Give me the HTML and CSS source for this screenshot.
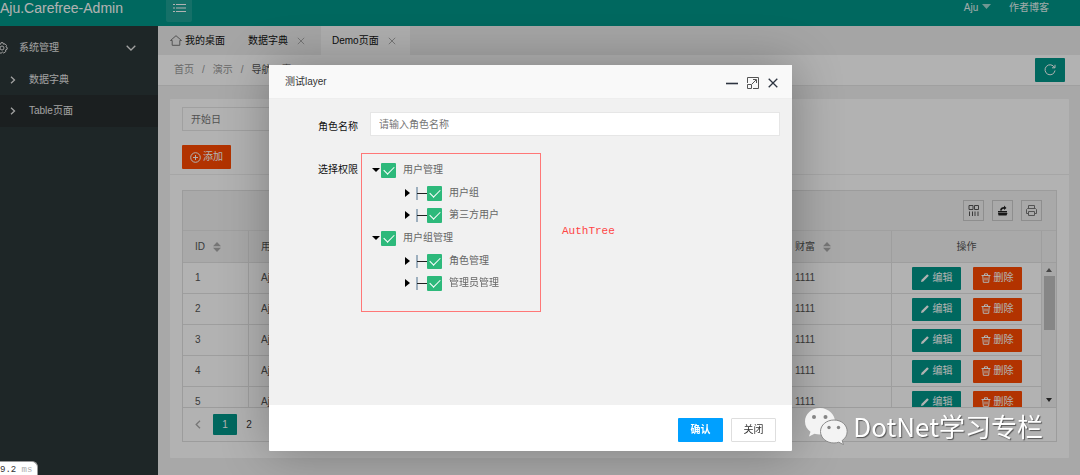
FILE: index.html
```html
<!DOCTYPE html>
<html lang="zh">
<head>
<meta charset="utf-8">
<title>Aju.Carefree-Admin</title>
<link rel="stylesheet" href="styles.css">
</head>
<body>
<svg class="sprite" aria-hidden="true">
  <symbol id="i-pen" viewBox="0 0 10 10"><path d="M1 9l.6-2.2L7.200 1.200l1.600 1.600L3.200 8.400z" fill="currentColor"/></symbol>
  <symbol id="i-bin" viewBox="0 0 10 10"><path d="M.5 2.500h9M3.500 2.300V.8h3v1.500M1.800 2.800l.5 6.500h5.400l.5-6.500M4 4.500v3M6 4.500v3" fill="none" stroke="currentColor"/></symbol>
  <symbol id="i-sort" viewBox="0 0 8 10"><path d="M0 4.200L4 0l4 4.200zM0 5.800h8L4 10z" fill="currentColor"/></symbol>
  <symbol id="i-x" viewBox="0 0 8 8"><path d="M.8.8l6.400 6.400M7.200.8L.8 7.200" fill="none" stroke="currentColor"/></symbol>
  <symbol id="i-right" viewBox="0 0 8 8"><path d="M2 .8L5.500 4 2 7.200" fill="none" stroke="currentColor" stroke-width="1.300"/></symbol>
  <symbol id="i-branch" viewBox="0 0 11 14"><path d="M1 1v13" stroke="#4a6f8c"/><path d="M1 7.500h10" stroke="#222"/></symbol>
</svg>

<div class="app">
  <header class="topbar">
    <div class="brand">Aju.Carefree-Admin</div>
    <button class="menu-toggle" aria-label="菜单"><svg width="13" height="10" viewBox="0 0 13 10"><path d="M3 1.500h10M3 5h10M3 8.500h10M0 1.500h2M0 5h2M0 8.500h2" stroke="currentColor" fill="none"/></svg></button>
    <nav class="user-nav">
      <a href="#">Aju <svg width="9" height="5" viewBox="0 0 9 5"><path d="M0 0h9L4.500 5z" fill="currentColor"/></svg></a>
      <a href="#">作者博客</a>
    </nav>
  </header>

  <div class="shell">
    <nav class="sidebar">
      <a class="side-group" href="#">
        <svg class="gear" width="12" height="12" viewBox="0 0 12 12" fill="none" stroke="currentColor"><path d="M5 .7h2l.5 1.500 1.500-.4 1.500 1.700-.6 1.400 1.400.8-.3 1.700-1.400.5.2 1.600L7.700 11l-1.200-.9L5 11.300 3.200 10.400l.2-1.600L1 8V6l1.200-.9-.7-1.500L3 2l1.500.3z"/><circle cx="6" cy="6" r="2"/></svg>
        <span>系统管理</span>
        <svg class="fold" width="10" height="6" viewBox="0 0 10 6"><path d="M.7.700L5 5 9.300.7" fill="none" stroke="currentColor" stroke-width="1.300"/></svg>
      </a>
      <a class="side-item" href="#"><svg width="8" height="8"><use href="#i-right"/></svg>数据字典</a>
      <a class="side-item active" href="#"><svg width="8" height="8"><use href="#i-right"/></svg>Table页面</a>
    </nav>

    <main class="main">
      <div class="tabs">
        <a class="tab home" href="#"><svg width="12" height="11" viewBox="0 0 12 11"><path d="M.5 5.500L6 .7l5.500 4.800H9.800v4.800H2.200V5.500z" fill="none" stroke="#777"/></svg>我的桌面</a>
        <a class="tab" href="#">数据字典<svg width="8" height="8"><use href="#i-x"/></svg></a>
        <a class="tab current" href="#">Demo页面<svg width="8" height="8"><use href="#i-x"/></svg></a>
      </div>
      <div class="crumb-bar">
        <nav class="crumbs"><a href="#">首页</a><span>/</span><a href="#">演示</a><span>/</span><a class="here" href="#">导航元素</a></nav>
        <button class="refresh" aria-label="刷新"><svg width="12" height="12" viewBox="0 0 12 12" fill="none" stroke="currentColor"><path d="M10.500 3.500A5 5 0 1 0 11 6.500M11 .8v3H8"/></svg></button>
      </div>

      <section class="card">
        <div class="card-head">
          <input class="date-input" type="text" placeholder="开始日" aria-label="开始日">
          <button class="btn danger add"><svg width="11" height="11" viewBox="0 0 11 11" fill="none" stroke="currentColor"><circle cx="5.500" cy="5.500" r="4.800"/><path d="M5.500 3v5M3 5.500h5"/></svg>添加</button>
        </div>
        <div class="grid">
          <div class="grid-tools">
            <button aria-label="筛选列"><svg width="11" height="11" viewBox="0 0 11 11" fill="none" stroke="#555"><path d="M1 .5h4v4H1zM6.500.5h4v4h-4zM1.500 6.500V11M4.500 6.500V11M7 6.500V11M10 6.500V11"/></svg></button>
            <button aria-label="导出"><svg width="11" height="11" viewBox="0 0 11 11"><path d="M1 6h9v1.500H1zM1 8h9.500L9.500 10.500h-8zM3 5.500C3 3 5 2 7 2V.5L9.500 3 7 5V3.700C5 3.700 5 4.500 5 5.500z" fill="#222"/></svg></button>
            <button aria-label="打印"><svg width="11" height="11" viewBox="0 0 11 11" fill="none" stroke="#777"><path d="M2.500 3.500v-3h6v3M2.500 8.500h-2v-4l1-1h8l1 1v4h-2M2.500 6.500h6v4h-6z"/></svg></button>
          </div>
          <div class="grid-view">
            <table class="data">
              <colgroup><col class="c-id"><col><col class="c-money"><col class="c-ops"></colgroup>
              <thead><tr><th>ID <svg class="sort" width="8" height="10"><use href="#i-sort"/></svg></th><th>用户名</th><th>财富 <svg class="sort" width="8" height="10"><use href="#i-sort"/></svg></th><th class="ops">操作</th></tr></thead>
              <tbody>
                <tr><td>1</td><td>Aju</td><td>1111</td><td class="ops"><button class="btn"><svg width="10" height="10"><use href="#i-pen"/></svg>编辑</button><button class="btn danger"><svg width="10" height="10"><use href="#i-bin"/></svg>删除</button></td></tr>
                <tr><td>2</td><td>Aju</td><td>1111</td><td class="ops"><button class="btn"><svg width="10" height="10"><use href="#i-pen"/></svg>编辑</button><button class="btn danger"><svg width="10" height="10"><use href="#i-bin"/></svg>删除</button></td></tr>
                <tr><td>3</td><td>Aju</td><td>1111</td><td class="ops"><button class="btn"><svg width="10" height="10"><use href="#i-pen"/></svg>编辑</button><button class="btn danger"><svg width="10" height="10"><use href="#i-bin"/></svg>删除</button></td></tr>
                <tr><td>4</td><td>Aju</td><td>1111</td><td class="ops"><button class="btn"><svg width="10" height="10"><use href="#i-pen"/></svg>编辑</button><button class="btn danger"><svg width="10" height="10"><use href="#i-bin"/></svg>删除</button></td></tr>
                <tr><td>5</td><td>Aju</td><td>1111</td><td class="ops"><button class="btn"><svg width="10" height="10"><use href="#i-pen"/></svg>编辑</button><button class="btn danger"><svg width="10" height="10"><use href="#i-bin"/></svg>删除</button></td></tr>
              </tbody>
            </table>
            <div class="scroll">
              <div class="scroll-head"></div>
              <svg width="6" height="4" viewBox="0 0 6 4"><path d="M0 4l3-4 3 4z" fill="#666"/></svg>
              <div class="thumb"></div>
              <svg class="down" width="6" height="4" viewBox="0 0 6 4"><path d="M0 0h6L3 4z" fill="#333"/></svg>
            </div>
          </div>
          <div class="pager">
            <a href="#" aria-label="上一页"><svg width="6" height="9" viewBox="0 0 6 9"><path d="M5 .8L1.200 4.500 5 8.200" fill="none" stroke="#aaa" stroke-width="1.300"/></svg></a>
            <a class="on" href="#">1</a>
            <a href="#">2</a>
          </div>
        </div>
      </section>
    </main>
  </div>
</div>

<div class="shade"></div>

<div class="dialog" role="dialog" aria-label="测试layer">
  <div class="dialog-title">
    <span>测试layer</span>
    <div class="win-tools">
      <button aria-label="最小化"><svg width="12" height="12" viewBox="0 0 12 12"><path d="M0 6.500h12" stroke="#2d3440" stroke-width="1.600"/></svg></button>
      <button aria-label="最大化"><svg width="12" height="12" viewBox="0 0 12 12" fill="none" stroke="#555"><path d="M.5 6V.5h11v11H6M.5 7.500h4v4h-4zM5 7l4-4M6 2.500h3.500V6"/></svg></button>
      <button aria-label="关闭窗口"><svg width="10" height="10" viewBox="0 0 10 10"><path d="M.7.700l8.600 8.600M9.300.7L.7 9.300" stroke="#2d3440" stroke-width="1.300"/></svg></button>
    </div>
  </div>
  <form class="dialog-body">
    <div class="field">
      <label for="role">角色名称</label>
      <input id="role" type="text" placeholder="请输入角色名称">
    </div>
    <div class="field">
      <span class="field-label">选择权限</span>
      <div class="tree">
        <div class="node"><i class="open"></i><label><input type="checkbox" checked>用户管理</label></div>
        <div class="node child"><i class="closed"></i><svg width="11" height="14"><use href="#i-branch"/></svg><label><input type="checkbox" checked>用户组</label></div>
        <div class="node child"><i class="closed"></i><svg width="11" height="14"><use href="#i-branch"/></svg><label><input type="checkbox" checked>第三方用户</label></div>
        <div class="node"><i class="open"></i><label><input type="checkbox" checked>用户组管理</label></div>
        <div class="node child"><i class="closed"></i><svg width="11" height="14"><use href="#i-branch"/></svg><label><input type="checkbox" checked>角色管理</label></div>
        <div class="node child"><i class="closed"></i><svg width="11" height="14"><use href="#i-branch"/></svg><label><input type="checkbox" checked>管理员管理</label></div>
      </div>
    </div>
  </form>
  <div class="dialog-foot">
    <button class="ok">确认</button>
    <button class="cancel">关闭</button>
  </div>
  <div class="mark-box"></div>
  <div class="mark-text">AuthTree</div>
</div>

<div class="watermark">
  <svg width="44" height="38" viewBox="0 0 44 38">
    <path d="M16 1C7.500 1 1 7 1 14.500c0 4.500 2.200 8 5.500 10.300L5 29.500l5.500-2.700c1.800.5 3.500.7 5.500.7 8.500 0 15-6 15-13S24.500 1 16 1z" fill="#f3f3f3"/>
    <path d="M30 13c-7.500 0-13.500 5-13.500 11.500S22.500 36 30 36c1.800 0 3.300-.3 4.800-.8l4.700 2.500-1.300-4.200c3.200-2.200 5-5.300 5-9C43.200 18 37.500 13 30 13z" fill="#f3f3f3" stroke="#8a8a8a"/>
    <g fill="#858585"><circle cx="10" cy="10" r="2"/><circle cx="21.500" cy="10" r="2"/><circle cx="25" cy="20.500" r="1.700"/><circle cx="34.500" cy="20.500" r="1.700"/></g>
  </svg>
  <span>DotNet学习专栏</span>
</div>

<div class="timing">9.2 <span>ms</span></div>
</body>
</html>
```

FILE: styles.css
```css
* { box-sizing: border-box; }
body {
  margin: 0;
  font: 10px/14px "Liberation Sans", "Noto Sans CJK SC", sans-serif;
  color: #555;
  overflow: hidden;
}
a { color: inherit; text-decoration: none; }
button, input { font: inherit; color: inherit; margin: 0; padding: 0; }
button { border: 0; background: none; display: flex; align-items: center; justify-content: center; }
svg { flex: none; }
.sprite { display: none; }

.app { display: flex; flex-direction: column; height: 100vh; }
.shell { display: flex; flex: 1; min-height: 0; }

/* top bar */
.topbar { display: flex; height: 26px; padding-bottom: 11px; background: #009688; color: #fff; align-items: center; }
.brand { width: 166px; font-size: 14px; }
.menu-toggle { width: 26px; height: 28px; border-radius: 2px; background: #1fa195; }
.user-nav { display: flex; gap: 18px; margin-left: auto; padding-right: 31px; color: #e6f4f3; }
.user-nav svg { vertical-align: 2px; margin-left: 1px; opacity: .7; }

/* sidebar */
.sidebar { width: 158px; flex: none; background: #2c3738; color: #e8e8e8; padding-top: 6px; }
.side-group { display: flex; align-items: center; height: 32px; padding-right: 22px; }
.gear { margin-left: -4px; margin-right: 11px; }
.fold { margin-left: auto; }
.side-item { display: flex; align-items: center; gap: 12px; height: 31px; padding-left: 9px; }
.side-item.active { height: 32px; background: #272d2e; }

/* tabs */
.main { flex: 1; min-width: 0; background: #f1f1f1; }
.tabs { display: flex; height: 29px; background: #ededed; color: #111; }
.tab { display: flex; align-items: center; padding: 0 16px 0 11px; gap: 9px; }
.tab.home { padding: 0 12px; gap: 3px; }
.tab svg { color: #aaa; }
.tab.current { background: #f9f9f9; padding: 0 14px 0 11px; }

.crumb-bar { display: flex; align-items: center; justify-content: space-between; height: 31px; padding: 0 15px 0 16px; background: #fff; border-bottom: 1px solid #e6e6e6; }
.crumbs { display: flex; gap: 8px; color: #999; }
.crumbs .here { color: #555; }
.refresh { width: 30px; height: 24px; border-radius: 1px; background: #009688; color: #fff; }

/* content card */
.card { margin: 13px 11px 0 12px; background: #fff; padding-bottom: 16px; border-radius: 1px; }
.card-head { display: flex; flex-direction: column; align-items: flex-start; gap: 14px; padding: 8px 12px 5px; border-bottom: 1px solid #eee; margin-bottom: 15px; }
.date-input { width: 152px; height: 24px; border: 1px solid #e6e6e6; padding: 0 8px; background: #fff; }
::placeholder { color: #757575; opacity: 1; }
.btn { display: inline-flex; gap: 3px; width: 49px; height: 23px; border-radius: 1px; background: #009688; color: #fff; }
.btn.danger { background: #ff4a00; }
.btn.add { height: 24px; gap: 2px; }

.grid { margin: 0 12px; border: 1px solid #e0e0e0; }
.grid-tools { display: flex; justify-content: flex-end; align-items: center; gap: 8px; height: 40px; padding-right: 14px; background: #f2f2f2; border-bottom: 1px solid #e6e6e6; }
.grid-tools button { width: 21px; height: 21px; border: 1px solid #ccc; }
.grid-view { display: flex; height: 177px; overflow: hidden; align-items: flex-start; border-bottom: 1px solid #e0e0e0; }
.data { flex: 1; min-width: 0; table-layout: fixed; border-collapse: separate; border-spacing: 0; }
.c-id { width: 66px; }
.c-money { width: 109px; }
.c-ops { width: 150px; }
.data th, .data td { height: 31px; padding: 0 12px; text-align: left; font-weight: normal; border-right: 1px solid #e2e2e2; border-bottom: 1px solid #e2e2e2; }
.data th { height: 32px; background: #f2f2f2; }
.data .ops { text-align: center; padding: 0; }
.ops .btn + .btn { margin-left: 12px; }
.ops .btn { vertical-align: middle; }
.sort { vertical-align: -2px; margin-left: 5px; color: #aaa; }
.scroll { width: 14px; height: 176px; display: flex; flex-direction: column; align-items: center; background: #f1f1f1; }
.scroll-head { width: 100%; height: 32px; margin-bottom: 5px; border-bottom: 1px solid #e2e2e2; background: #f2f2f2; }
.thumb { width: 11px; height: 54px; margin-top: 4px; background: #c1c1c1; }
.down { margin: auto 0 5px; }

.pager { display: flex; align-items: center; height: 33px; padding-left: 3px; }
.pager a { display: flex; justify-content: center; align-items: center; width: 24px; height: 21px; color: #333; }
.pager .on { margin-left: 3px; background: #009688; color: #fff; border-radius: 1px; }

.shade { position: fixed; inset: 0; background: rgba(0, 0, 0, .3); }

/* dialog */
.dialog { position: absolute; left: 269px; top: 65px; width: 523px; height: 386px; display: flex; flex-direction: column; background: #fff; border-radius: 1px; box-shadow: 1px 1px 50px rgba(0, 0, 0, .3); }
.dialog-title { display: flex; align-items: center; justify-content: space-between; height: 34px; padding: 0 14px 0 16px; background: #f9f9f9; border-bottom: 1px solid #eee; color: #333; }
.win-tools { display: flex; gap: 9px; padding-top: 2px; }
.dialog-body { flex: 1; padding: 13px 12px 0 0; background: #f1f1f1; color: #111; }
.field { display: flex; align-items: flex-start; }
.field > label, .field-label { width: 101px; padding: 8px 12px 0 0; text-align: right; }
.field > input { flex: 1; height: 24px; border: 1px solid #e6e6e6; background: #fff; padding: 0 8px; }
.field + .field { margin-top: 19px; }
.tree { padding: 3px 0 0 2px; color: #666; }
.node { display: flex; align-items: center; height: 24px; }
.node.child { height: 22px; padding-left: 33px; }
.node label { display: flex; align-items: center; gap: 7px; }
.node input { appearance: none; width: 15px; height: 15px; border-radius: 1px; background: #2db97b; display: flex; align-items: center; justify-content: center; }
.node input::before { content: ""; width: 9px; height: 5px; border: solid #fff; border-width: 0 0 1px 1px; transform: translateY(-1px) rotate(-45deg); }
.open { border: 4px solid transparent; border-top-color: #000; border-bottom: 0; margin-right: 1px; }
.closed { border: 4px solid transparent; border-left: 5px solid #000; border-right: 0; margin-right: 6px; }
.dialog-foot { display: flex; justify-content: flex-end; align-items: center; gap: 8px; height: 46px; padding: 3px 16px 0; }
.dialog-foot button { width: 45px; height: 24px; border-radius: 1px; }
.dialog-foot .ok { background: #00a0ff; color: #fff; font-weight: bold; }
.dialog-foot .cancel { border: 1px solid #dedede; color: #333; }

.mark-box { position: absolute; left: 92px; top: 88px; width: 180px; height: 159px; border: 1px solid #f77; }
.mark-text { position: absolute; left: 293px; top: 159px; font: 11px/14px "Liberation Mono", monospace; color: #ff4545; }

.watermark { position: absolute; right: 37px; bottom: 30px; display: flex; align-items: center; gap: 5px; color: #fff; font: 26px/38px "Noto Sans CJK SC", sans-serif; text-shadow: 1px 1px 1px #555; }

.timing { position: absolute; left: 0; bottom: 0; height: 14px; padding: 1px 5px 0 0; background: #fff; border: 1px solid #999; border-width: 1px 1px 0 0; border-top-right-radius: 6px; color: #333; font: 9px/14px "Liberation Mono", monospace; }
.timing span { color: #aaa; }
```
